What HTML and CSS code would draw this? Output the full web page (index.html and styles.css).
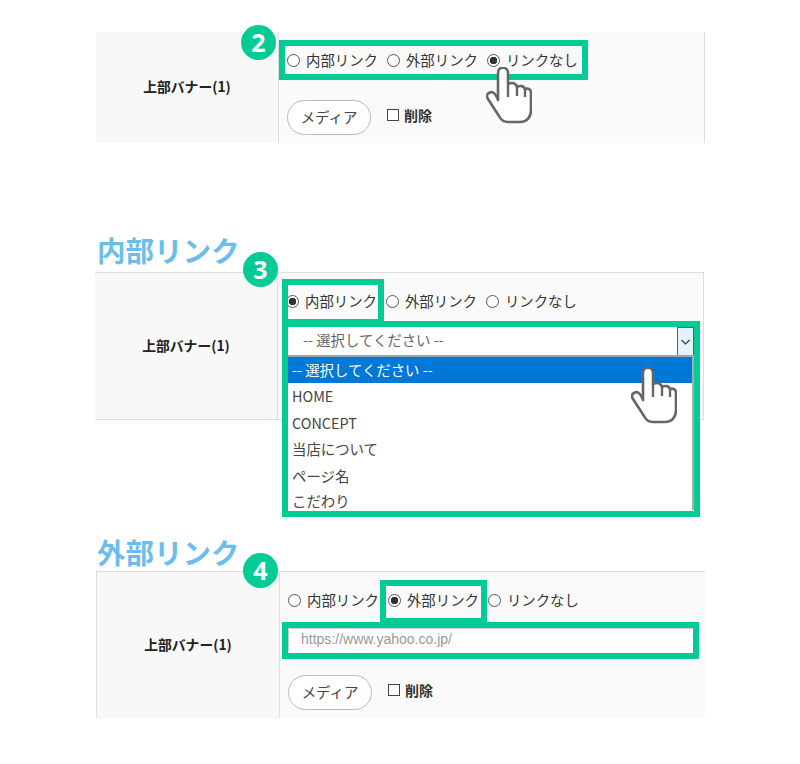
FILE: index.html
```html
<!DOCTYPE html>
<html lang="ja">
<head>
  <meta charset="UTF-8">
  <meta name="viewport" content="width=device-width, initial-scale=1.0">
  <title>上部バナー リンク設定</title>
  <link rel="stylesheet" href="styles.css">
</head>
<body>
  <svg class="sprite" width="0" height="0" aria-hidden="true">
    <symbol id="hand" viewBox="0 0 46 57">
      <path d="M12 33V6c0-7 10-7 10 0v11c4-2 8-1 9 3c3-2 7-1 8 2c3-1 6 0 6 4v17c0 7-4 12-11 12H22c-4 0-7-2-9-6L2 32c-2-3-1-5 1-6c3-2 6-1 9 7z" fill="#fff" stroke="#666" stroke-width="2.6" stroke-linejoin="round"/>
      <path d="M22 17v13M31 20v9M39 22v8" fill="none" stroke="#666" stroke-width="2.4"/>
    </symbol>
  </svg>

  <main class="page">
    <section class="panel panel-plain">
      <div class="panel-label">上部バナー(1)</div>
      <div class="panel-body">
        <div class="radios">
          <label class="radio"><input type="radio" name="a">内部リンク</label>
          <label class="radio"><input type="radio" name="a">外部リンク</label>
          <label class="radio"><input type="radio" name="a" checked>リンクなし</label>
        </div>
        <div class="media-row">
          <button class="media-btn">メディア</button>
          <label class="delete"><input type="checkbox">削除</label>
        </div>
      </div>
      <span class="badge badge-2">2</span>
      <span class="mark mark-2"></span>
      <svg class="hand hand-2"><use href="#hand"/></svg>
    </section>

    <h2 class="title title-internal">内部リンク</h2>
    <section class="panel panel-internal">
      <div class="panel-label">上部バナー(1)</div>
      <div class="panel-body">
        <div class="radios">
          <label class="radio"><input type="radio" name="b" checked>内部リンク</label>
          <label class="radio"><input type="radio" name="b">外部リンク</label>
          <label class="radio"><input type="radio" name="b">リンクなし</label>
        </div>
        <div class="select">
          <span class="select-value">-- 選択してください --</span>
          <span class="select-arrow">
            <svg width="9" height="6" viewBox="0 0 9 6"><path d="M.5 1l4 4 4-4" fill="none" stroke="#333" stroke-width="1.1"/></svg>
          </span>
          <ul class="options">
            <li class="is-active">-- 選択してください --</li>
            <li>HOME</li>
            <li>CONCEPT</li>
            <li>当店について</li>
            <li>ページ名</li>
            <li>こだわり</li>
          </ul>
        </div>
      </div>
      <span class="badge badge-3">3</span>
      <span class="mark mark-3a"></span>
      <span class="mark mark-3b"></span>
      <svg class="hand hand-3"><use href="#hand"/></svg>
    </section>

    <h2 class="title title-external">外部リンク</h2>
    <section class="panel panel-external">
      <div class="panel-label">上部バナー(1)</div>
      <div class="panel-body">
        <div class="radios">
          <label class="radio"><input type="radio" name="c">内部リンク</label>
          <label class="radio"><input type="radio" name="c" checked>外部リンク</label>
          <label class="radio"><input type="radio" name="c">リンクなし</label>
        </div>
        <input class="url" type="text" placeholder="https://www.yahoo.co.jp/">
        <div class="media-row">
          <button class="media-btn">メディア</button>
          <label class="delete"><input type="checkbox">削除</label>
        </div>
      </div>
      <span class="badge badge-4">4</span>
      <span class="mark mark-4a"></span>
      <span class="mark mark-4b"></span>
    </section>
  </main>
</body>
</html>
```

FILE: styles.css
```css
body {
  margin: 0;
  background-color: #fff;
  color: #333;
  font-family: "Noto Sans CJK JP", "Liberation Sans", sans-serif;
}
.sprite {
  position: absolute;
}
.page {
  width: 610px;
  margin-left: 96px;
  padding-top: 32px;
}
.title {
  margin: 0;
  font-size: 28.5px;
  font-weight: 700;
  color: #6cbcec;
}
.title-internal {
  height: 41px;
  margin: 88px 0 0 1px;
  line-height: 38px;
}
.title-external {
  height: 39px;
  margin: 112px 0 0 1px;
  line-height: 40px;
}
.panel {
  position: relative;
  display: flex;
  box-sizing: border-box;
  width: 609px;
  border-right: 1px solid #ddd;
}
.panel-plain {
  height: 111px;
}
.panel-internal {
  height: 148px;
  margin-left: -1px;
  border-top: 1px solid #ddd;
  border-bottom: 1px solid #ddd;
}
.panel-external {
  height: 147px;
  border-top: 1px solid #ddd;
  border-left: 1px solid #ddd;
  border-right: 0;
}
.panel-label {
  display: flex;
  align-items: center;
  justify-content: center;
  flex: 0 0 183px;
  box-sizing: border-box;
  padding-bottom: 3px;
  background-color: #f8f8f8;
  border-right: 1px solid #ddd;
  font-size: 13.8px;
  font-weight: 700;
  color: #222;
}
.panel-body {
  flex: 1;
  padding: 18px 0 0 8px;
  background-color: #fafafa;
}
.radios {
  display: flex;
  height: 20px;
  align-items: center;
  gap: 9px;
}
.radio {
  display: flex;
  align-items: center;
  gap: 6px;
  font-size: 14.4px;
  line-height: 20px;
  color: #333;
}
.radio input {
  appearance: none;
  width: 13px;
  height: 13px;
  margin: 0;
  border: 1px solid #555;
  border-radius: 50%;
  background: #fff;
}
.radio input:checked {
  background: radial-gradient(circle, #333 0 3.5px, #fff 4px);
}
.media-row {
  display: flex;
  align-items: center;
  gap: 16px;
  margin-top: 30px;
}
.panel-external .media-row {
  margin-top: 23px;
}
.media-btn {
  width: 84px;
  height: 35px;
  padding: 0 0 2px;
  background-color: #fff;
  border: 1px solid #bbb;
  border-radius: 18px;
  font-family: inherit;
  font-size: 14.4px;
  color: #444;
}
.delete {
  display: flex;
  align-items: center;
  gap: 5px;
  margin-top: -5px;
  font-size: 14px;
  font-weight: 700;
}
.delete input {
  appearance: none;
  width: 12px;
  height: 12px;
  margin: 0;
  border: 1px solid #444;
  background: #fff;
}
.select {
  position: relative;
  display: flex;
  align-items: center;
  justify-content: space-between;
  height: 29px;
  margin: 16px 9px 0 2px;
  background-color: #fff;
  font-size: 14.4px;
  color: #666;
}
.select-value {
  padding: 0 0 4px 15px;
}
.select-arrow {
  display: flex;
  align-items: center;
  justify-content: center;
  box-sizing: border-box;
  width: 17px;
  height: 29px;
  background-color: #e5f1fb;
  border: 1px solid #0078d7;
}
.options {
  position: absolute;
  top: 28px;
  left: 0;
  right: 0;
  height: 155px;
  margin: 0;
  padding: 0;
  overflow: hidden;
  list-style: none;
  box-sizing: border-box;
  background-color: #fff;
  border-top: 2px solid #9aa5b1;
  border-right: 2px solid #aaa;
  color: #444;
}
.options li {
  height: 26.4px;
  line-height: 26px;
  padding-left: 4px;
}
.options li:last-child {
  box-sizing: border-box;
  height: 22px;
  padding-top: 2px;
  line-height: 20px;
}
.options .is-active {
  background-color: #0078d7;
  color: #fff;
}
.url {
  display: block;
  box-sizing: border-box;
  width: 405px;
  height: 24px;
  margin: 18px 0 0;
  padding: 0 12px 3px;
  border: 0;
  border-top: 1px solid #ccc;
  border-left: 1px solid #ccc;
  background-color: #fff;
  font-family: "Liberation Sans", sans-serif;
  font-size: 14px;
}
.url::placeholder {
  color: #999;
}
.badge {
  position: absolute;
  width: 35px;
  height: 35px;
  border-radius: 50%;
  background-color: #03cb96;
  color: #fff;
  font-family: "Open Sans", sans-serif;
  font-size: 25px;
  font-weight: 700;
  line-height: 35px;
  text-align: center;
}
.badge-2 {
  left: 145px;
  top: -7px;
}
.badge-3 {
  left: 148px;
  top: -21px;
}
.badge-4 {
  left: 146px;
  top: -19px;
}
.mark {
  position: absolute;
  box-sizing: border-box;
  border: 6px solid #03cb96;
}
.mark-2 {
  left: 183px;
  top: 8px;
  width: 309px;
  height: 40px;
}
.mark-3a {
  left: 187px;
  top: 6px;
  width: 102px;
  height: 46px;
}
.mark-3b {
  left: 187px;
  top: 48px;
  width: 418px;
  height: 196px;
}
.mark-4a {
  left: 283px;
  top: 8px;
  width: 107px;
  height: 44px;
}
.mark-4b {
  left: 185px;
  top: 50px;
  width: 417px;
  height: 37px;
}
.hand {
  position: absolute;
  width: 46px;
  height: 57px;
}
.hand-2 {
  left: 390px;
  top: 35px;
}
.hand-3 {
  left: 536px;
  top: 94px;
}
```
